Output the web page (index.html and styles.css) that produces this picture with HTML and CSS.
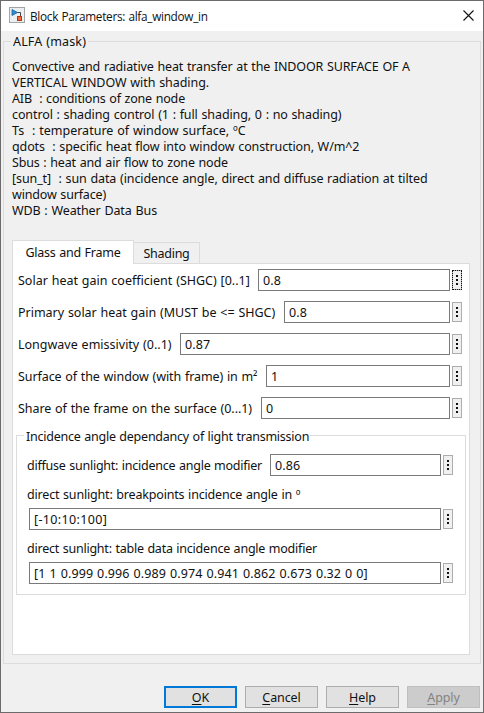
FILE: index.html
```html
<!DOCTYPE html>
<html lang="en">
<head>
<meta charset="utf-8">
<title>Block Parameters: alfa_window_in</title>
<link rel="stylesheet" href="styles.css">
</head>
<body>
<div class="window">
  <header class="titlebar">
    <svg class="app-icon" width="16" height="16" viewBox="0 0 16 16">
      <rect x=".5" y=".5" width="15" height="15" fill="#eceff1" stroke="#a3a3a3"/>
      <path d="M8 5.500h3.500V9" fill="none" stroke="#454545"/>
      <path d="M3 2.500v6l5.500-3z" fill="#2d8fd0" stroke="#175f98" stroke-width=".8"/>
      <rect x="8.500" y="9.500" width="4" height="4" fill="#f16a35" stroke="#bb3512"/>
    </svg>
    <h1 class="title">Block Parameters: alfa_window_in</h1>
    <svg class="close" width="11" height="11" viewBox="0 0 11 11"><path d="M.5.5l10 10M10.500.5l-10 10" stroke="#111" stroke-width="1.100"/></svg>
  </header>

  <main class="mask">
    <h2 class="mask-legend">ALFA (mask)</h2>
    <div class="description">
      <p class="d-convective">Convective and radiative heat transfer at the INDOOR SURFACE OF A</p>
      <p class="d-vertical">VERTICAL WINDOW with shading.</p>
      <p class="d-aib">AIB  : conditions of zone node</p>
      <p class="d-control">control : shading control (1 : full shading, 0 : no shading)</p>
      <p class="d-ts">Ts  : temperature of window surface, ºC</p>
      <p class="d-qdots">qdots  : specific heat flow into window construction, W/m^2</p>
      <p class="d-sbus">Sbus : heat and air flow to zone node</p>
      <p class="d-sun">[sun_t]  : sun data (incidence angle, direct and diffuse radiation at tilted</p>
      <p class="d-surface">window surface)</p>
      <p class="d-wdb">WDB : Weather Data Bus</p>
    </div>

    <div class="tabs">
      <div class="tab active">Glass and Frame</div>
      <div class="tab">Shading</div>
    </div>
    <section class="panel">
      <div class="row"><label class="l-solar">Solar heat gain coefficient (SHGC) [0..1]</label><div class="field">0.8</div><div class="more focused"><i></i><i></i><i></i></div></div>
      <div class="row"><label class="l-primary">Primary solar heat gain (MUST be &lt;= SHGC)</label><div class="field">0.8</div><div class="more"><i></i><i></i><i></i></div></div>
      <div class="row"><label class="l-emissivity">Longwave emissivity (0..1)</label><div class="field">0.87</div><div class="more"><i></i><i></i><i></i></div></div>
      <div class="row"><label class="l-surface">Surface of the window (with frame) in m²</label><div class="field">1</div><div class="more"><i></i><i></i><i></i></div></div>
      <div class="row"><label class="l-share">Share of the frame on the surface (0...1)</label><div class="field">0</div><div class="more"><i></i><i></i><i></i></div></div>

      <div class="group">
        <h3 class="group-legend">Incidence angle dependancy of light transmission</h3>
        <div class="row"><label class="l-diffuse">diffuse sunlight: incidence angle modifier</label><div class="field">0.86</div><div class="more"><i></i><i></i><i></i></div></div>
        <label class="above l-breakpoints">direct sunlight: breakpoints incidence angle in º</label>
        <div class="row full"><div class="field v-range">[-10:10:100]</div><div class="more"><i></i><i></i><i></i></div></div>
        <label class="above l-table">direct sunlight: table data incidence angle modifier</label>
        <div class="row full"><div class="field">[1 1 0.999 0.996 0.989 0.974 0.941 0.862 0.673 0.32 0 0]</div><div class="more"><i></i><i></i><i></i></div></div>
      </div>
    </section>
  </main>

  <footer class="actions">
    <div class="button primary"><span><u>O</u>K</span></div>
    <div class="button"><span><u>C</u>ancel</span></div>
    <div class="button"><span><u>H</u>elp</span></div>
    <div class="button disabled"><span><u>A</u>pply</span></div>
  </footer>
</div>
</body>
</html>
```
FILE: styles.css
```css
* { box-sizing: border-box; margin: 0; padding: 0; }
body {
  font: 12.5px/16px "Noto Sans", sans-serif;
  word-spacing: 0.6px;
  color: #111;
  white-space: nowrap;
}
.window {
  width: 484px;
  height: 713px;
  border: 1px solid #6d6a6b;
  background: #f0f0f0;
  display: flex;
  flex-direction: column;
}
.titlebar {
  height: 30px;
  background: #fff;
  display: flex;
  align-items: center;
  padding: 0 9px 2px 8px;
}
.title {
  flex: 1;
  margin-left: 5px;
  font: 11.8px/16px "Open Sans", sans-serif;
  letter-spacing: -0.3px;
  padding-top: 1px;
}

.mask {
  margin: 10px 2px 0;
  height: 623px;
  border: 1px solid #dcdcdc;
  padding: 0 10px 0 8px;
  display: flex;
  flex-direction: column;
}
.mask-legend {
  align-self: flex-start;
  margin: -8px 0 0 -1px;
  padding: 0 2px;
  font: inherit;
  letter-spacing: 0.14px;
  background: #f0f0f0;
}
.description { margin-top: 9px; height: 181px; }
.description p { white-space: pre; }
.d-convective { letter-spacing: -0.13px; }
.d-vertical { letter-spacing: -0.06px; }
.d-aib { letter-spacing: -0.17px; }
.d-control { letter-spacing: -0.1px; }
.d-ts { letter-spacing: 0.01px; }
.d-qdots { letter-spacing: -0.11px; }
.d-sbus { letter-spacing: -0.15px; }
.d-sun { letter-spacing: -0.1px; }
.d-surface { letter-spacing: -0.16px; }
.d-wdb { letter-spacing: -0.09px; }

.tabs { display: flex; align-items: flex-end; height: 23px; }
.tab {
  height: 21px;
  width: 66px;
  border: 1px solid #dcdcdc;
  border-width: 1px 1px 0 0;
  text-align: center;
  line-height: 21px;
  letter-spacing: -0.27px;
}
.tab.active {
  width: 122px;
  height: 24px;
  margin-bottom: -1px;
  border-left-width: 1px;
  background: #fff;
  letter-spacing: -0.24px;
  line-height: 24px;
  z-index: 1;
}
.panel {
  width: 458px;
  height: 392px;
  border: 1px solid #dcdcdc;
  background: #fff;
  padding: 5px 7px 0 5px;
}
.row {
  display: flex;
  align-items: center;
  height: 22px;
  margin-bottom: 10px;
}
.row label { padding-top: 2px; }
.field {
  flex: 1;
  height: 22px;
  border: 1px solid #7a7a7a;
  background: #fff;
  padding-left: 4px;
  line-height: 21px;
  letter-spacing: 0.11px;
}
.v-range { letter-spacing: 0.35px; }
.more {
  width: 10px;
  height: 20px;
  margin-left: 2px;
  border: 1px solid #adadad;
  background: #f0f0f0;
  display: flex;
  flex-direction: column;
  align-items: center;
  justify-content: center;
  gap: 2px;
}
.more i { width: 2px; height: 2px; background: #111; }
.more.focused { outline: 1px dotted #111; outline-offset: -1px; }

.l-solar { width: 240px; letter-spacing: 0; }
.l-primary { width: 266px; letter-spacing: -0.02px; }
.l-emissivity { width: 162px; letter-spacing: 0; }
.l-surface { width: 248px; letter-spacing: -0.08px; }
.l-share { width: 243px; letter-spacing: -0.055px; }
.l-diffuse { width: 243px; letter-spacing: -0.24px; }
.l-breakpoints { letter-spacing: -0.174px; }
.l-table { letter-spacing: -0.226px; }

.group {
  width: 450px;
  height: 160px;
  margin: 16px 0 0 -2px;
  border: 1px solid #dcdcdc;
  padding: 0 12px 0 10px;
}
.group-legend {
  width: 286px;
  height: 16px;
  margin: -8px 0 10px -3px;
  padding-left: 2px;
  font: inherit;
  line-height: 18px;
  letter-spacing: -0.235px;
  background: #fff;
}
.group .row { margin-bottom: 0; }
.group .full { padding-left: 2px; }
.above { display: block; height: 32px; line-height: 38px; }

.actions {
  display: flex;
  gap: 8px;
  justify-content: flex-end;
  padding: 22px 3px 0 0;
}
.button {
  width: 73px;
  height: 22px;
  border: 1px solid #adadad;
  background: #e1e1e1;
  display: flex;
  align-items: center;
  justify-content: center;
  padding-top: 1px;
  letter-spacing: -0.1px;
}
.button u { text-underline-offset: 2px; }
.button.primary { border: 2px solid #0078d7; }
.button.disabled { background: #ccc; border-color: #bfbfbf; color: #838383; }
```
